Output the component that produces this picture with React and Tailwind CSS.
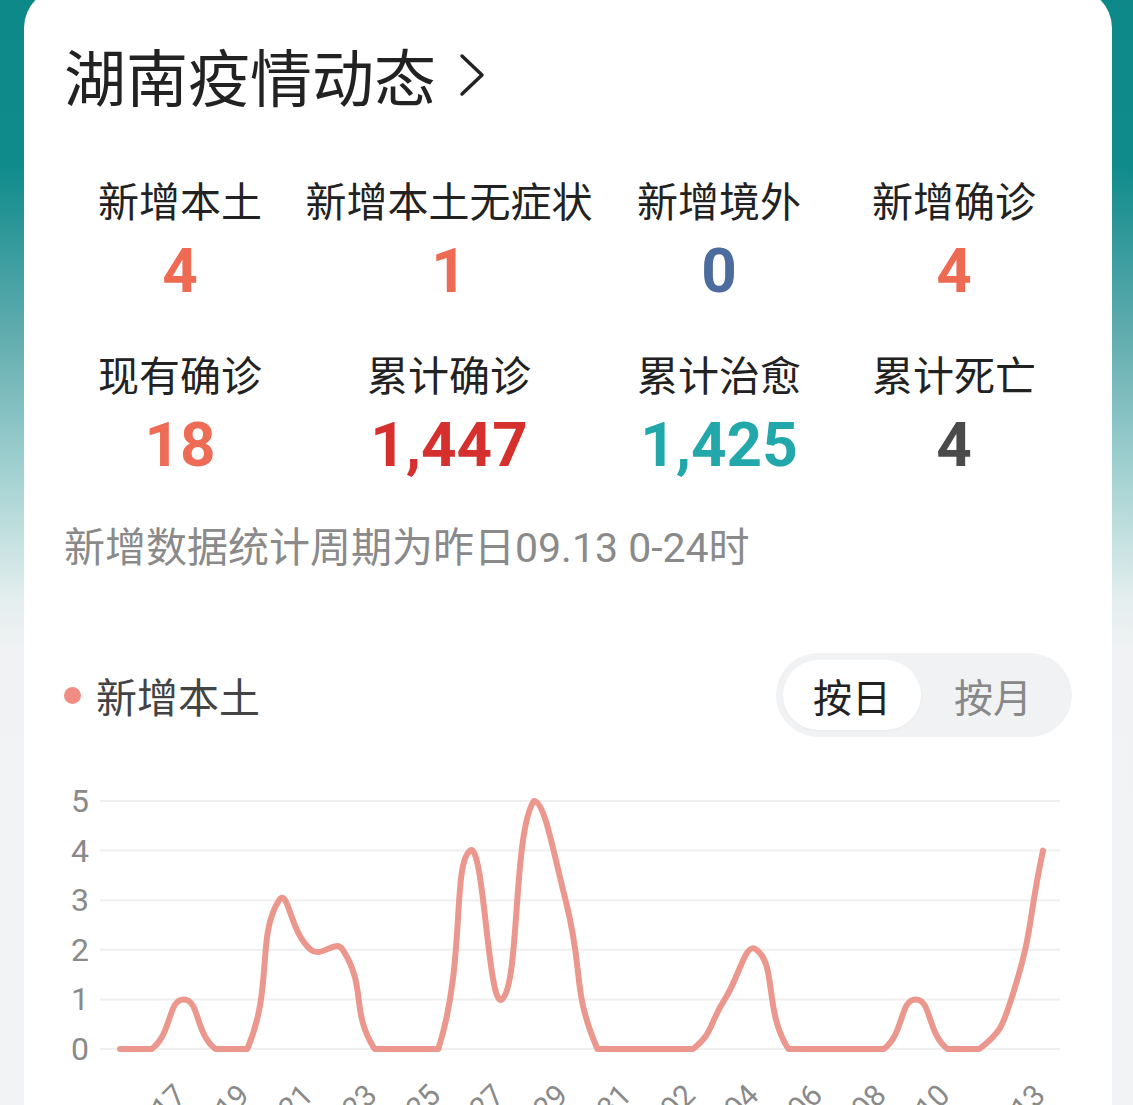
import React from 'react';

const cjk = { fontFamily: '"Noto Sans CJK SC", "Noto Sans", sans-serif' };
const num = { fontFamily: 'Roboto, "Noto Sans", sans-serif' };

const stats = [
  { label: '新增本土', value: '4', color: 'text-[#ef6a52]' },
  { label: '新增本土无症状', value: '1', color: 'text-[#ef6a52]' },
  { label: '新增境外', value: '0', color: 'text-[#4b6c9c]' },
  { label: '新增确诊', value: '4', color: 'text-[#ef6a52]' },
  { label: '现有确诊', value: '18', color: 'text-[#ee6b55]' },
  { label: '累计确诊', value: '1,447', color: 'text-[#d6302e]' },
  { label: '累计治愈', value: '1,425', color: 'text-[#22a8aa]' },
  { label: '累计死亡', value: '4', color: 'text-[#4a4a4a]' },
];

// 08.15 - 09.13 新增本土
const values = [0, 0, 1, 0, 0, 3, 2, 2, 0, 0, 0, 4, 1, 5, 3, 0, 0, 0, 0, 1, 2, 0, 0, 0, 0, 1, 0, 0, 1, 4];
const dates = values.map((_, i) => (i < 17 ? `08.${15 + i}` : `09.${String(i - 16).padStart(2, '0')}`));

const X0 = 120;
const STEP = 923 / 29;
const Y0 = 1049;
const UNIT = 49.6;

function smoothPath(pts, s = 0.5) {
  const ys = pts.map((p) => p[1]);
  const minY = Math.min(...ys);
  const maxY = Math.max(...ys);
  const clamp = (y) => Math.min(maxY, Math.max(minY, y));
  const cps = pts.map((p, i) => {
    const prev = pts[i - 1] || p;
    const next = pts[i + 1] || p;
    const vx = (next[0] - prev[0]) * s;
    const vy = (next[1] - prev[1]) * s;
    let d0 = Math.hypot(p[0] - prev[0], p[1] - prev[1]);
    let d1 = Math.hypot(p[0] - next[0], p[1] - next[1]);
    const sum = d0 + d1;
    if (sum) { d0 /= sum; d1 /= sum; }
    return {
      back: [p[0] - vx * d0, clamp(p[1] - vy * d0)],
      fwd: [p[0] + vx * d1, clamp(p[1] + vy * d1)],
    };
  });
  let d = `M${pts[0][0]},${pts[0][1]}`;
  for (let i = 0; i < pts.length - 1; i++) {
    const a = cps[i].fwd;
    const b = cps[i + 1].back;
    const p = pts[i + 1];
    d += ` C${a[0].toFixed(1)},${a[1].toFixed(1)} ${b[0].toFixed(1)},${b[1].toFixed(1)} ${p[0].toFixed(1)},${p[1].toFixed(1)}`;
  }
  return d;
}

const points = values.map((v, i) => [X0 + i * STEP, Y0 - v * UNIT]);
const linePath = smoothPath(points);
const labelIdx = [2, 4, 6, 8, 10, 12, 14, 16, 18, 20, 22, 24, 26, 29];

function Chart() {
  return (
    <svg className="block -mx-10 mt-[23px]" width="1088" height="345" viewBox="24 760 1088 345">
      {[0, 1, 2, 3, 4, 5].map((v) => (
        <g key={v}>
          <line x1="100" x2="1060" y1={Y0 - v * UNIT} y2={Y0 - v * UNIT} stroke="#efefef" strokeWidth="2" />
          <text x="89" y={Y0 - v * UNIT + 11} textAnchor="end" fontSize="32" fill="#8a8a8a" style={num}>
            {v}
          </text>
        </g>
      ))}
      <path d={linePath} fill="none" stroke="#eb978d" strokeWidth="6" strokeLinejoin="round" strokeLinecap="round" />
      {labelIdx.map((i) => {
        const x = X0 + i * STEP;
        return (
          <text
            key={i}
            x={x + 4}
            y="1097"
            textAnchor="end"
            fontSize="30"
            fill="#8a8a8a"
            style={num}
            transform={`rotate(-45 ${x + 4} 1097)`}
          >
            {dates[i]}
          </text>
        );
      })}
    </svg>
  );
}

export default function App() {
  return (
    <div
      className="h-[1105px] overflow-hidden pl-[24px] pr-[21px] bg-[linear-gradient(180deg,#0e898a_0px,#0f8b8c_165px,#5eabad_330px,#a6d3d3_480px,#e4eeee_600px,#f0f2f3_650px,#f1f3f4_100%)]"
      style={cjk}
    >
      <div className="mt-[-12px] h-[1200px] bg-white rounded-t-[40px] px-10 pt-[56px]">
        {/* title */}
        <div className="flex items-center h-[62px]">
          <h1 className="text-[62px] leading-none text-[#222]">湖南疫情动态</h1>
          <svg className="ml-[22px]" width="28" height="44" viewBox="0 0 28 44">
            <polyline points="4,3 24,22 4,41" fill="none" stroke="#222" strokeWidth="3.5" strokeLinecap="round" strokeLinejoin="round" />
          </svg>
        </div>

        {/* stats */}
        <div className="grid grid-cols-[232px_306px_234px_236px] gap-y-[34px] mt-[65px]">
          {stats.map((s) => (
            <div key={s.label} className="flex flex-col items-center">
              <div className="text-[41px] leading-[56px] text-[#222] whitespace-nowrap">{s.label}</div>
              <div className={`mt-[4px] text-[62px] leading-[80px] font-bold ${s.color}`} style={num}>
                {s.value}
              </div>
            </div>
          ))}
        </div>

        <p className="mt-[31px] text-[41px] leading-[56px] text-[#8a8a8a] whitespace-nowrap">
          新增数据统计周期为昨日<span style={num}>09.13 0-24</span>时
        </p>

        {/* legend + toggle */}
        <div className="mt-[77px] flex items-center justify-between">
          <div className="flex items-center">
            <span className="w-[17px] h-[17px] rounded-full bg-[#f28d84]" />
            <span className="ml-[15px] text-[41px] text-[#444] leading-none">新增本土</span>
          </div>
          <div className="flex items-center p-[7px] rounded-full bg-[#f1f2f4]">
            <div className="w-[138px] h-[70px] rounded-full bg-white flex items-center justify-center text-[39px] text-[#222] shadow-[0_1px_3px_rgba(0,0,0,0.04)]">
              按日
            </div>
            <div className="w-[144px] h-[70px] flex items-center justify-center text-[39px] text-[#888]">按月</div>
          </div>
        </div>

        <Chart />
      </div>
    </div>
  );
}
